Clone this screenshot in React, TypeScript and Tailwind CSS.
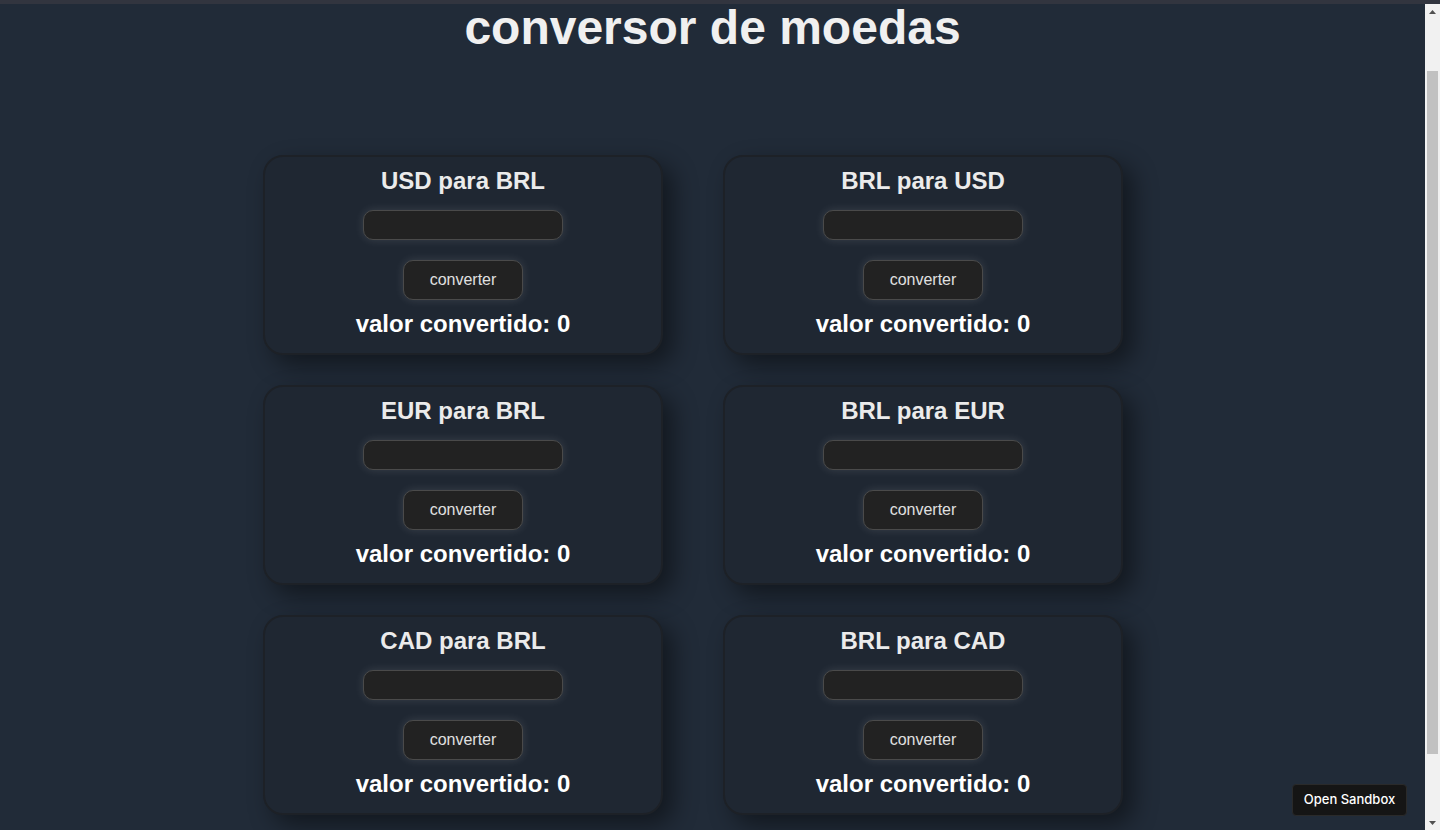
import React from "react";

const pairs = [
  "USD para BRL",
  "BRL para USD",
  "EUR para BRL",
  "BRL para EUR",
  "CAD para BRL",
  "BRL para CAD",
];

function Card({ title }: { title: string }) {
  return (
    <div className="h-[200px] w-[400px] rounded-[20px] border-2 border-[#1d2127] bg-[#1f2732] shadow-[10px_10px_25px_rgba(0,0,0,0.45)] flex flex-col items-center pt-[10px]">
      <h2 className="text-[24px] leading-[28px] font-bold text-[#ebebeb]">{title}</h2>
      <input
        type="text"
        className="mt-[15px] w-[200px] h-[30px] rounded-[10px] border border-[#4a4a4a] bg-[#222222] text-white px-2 outline-none shadow-[0_0_10px_rgba(255,255,255,0.12)]"
      />
      <button className="mt-[20px] w-[120px] h-[40px] rounded-[10px] border border-[#4a4a4a] bg-[#222222] text-[16px] text-[#e0e0e0] font-['Liberation_Sans',Arial,sans-serif] shadow-[0_0_10px_rgba(255,255,255,0.12)]">
        converter
      </button>
      <p className="mt-[10px] text-[24px] leading-[28px] font-bold text-white">valor convertido: 0</p>
    </div>
  );
}

function Scrollbar() {
  return (
    <div className="w-[15px] shrink-0 bg-[#f1f1f1] flex flex-col">
      <div className="h-[15px] flex items-center justify-center">
        <svg width="9" height="6" viewBox="0 0 9 6">
          <polygon points="4.5,1 8,5 1,5" fill="#505050" />
        </svg>
      </div>
      <div className="h-[52px]" />
      <div className="h-[683px] mx-[2px] bg-[#c1c1c1]" />
      <div className="flex-1" />
      <div className="h-[15px] flex items-center justify-center">
        <svg width="9" height="6" viewBox="0 0 9 6">
          <polygon points="1,1 8,1 4.5,5" fill="#505050" />
        </svg>
      </div>
    </div>
  );
}

export default function App() {
  return (
    <div className="h-screen flex flex-col bg-[#212b38] font-['Liberation_Sans',Arial,sans-serif] overflow-hidden">
      <div className="h-[4px] shrink-0 bg-[#32353f]" />
      <div className="flex-1 flex min-h-0">
        <div className="flex-1 overflow-hidden">
          <div className="mt-[-4px]">
            <h1 className="text-center text-[48px] leading-[56px] font-bold text-[#f0f0f0]">conversor de moedas</h1>
            <div className="mt-[99px] ml-[263px] grid grid-cols-[400px_400px] gap-x-[60px] gap-y-[30px]">
              {pairs.map((p) => (
                <Card key={p} title={p} />
              ))}
            </div>
          </div>
        </div>
        <Scrollbar />
      </div>
      <button className="fixed right-[33px] bottom-[14px] w-[115px] h-[32px] rounded-[4px] border border-[#2a2a2a] bg-[#151515] text-white text-[13px] font-medium font-['Inter',sans-serif]">
        Open Sandbox
      </button>
    </div>
  );
}
